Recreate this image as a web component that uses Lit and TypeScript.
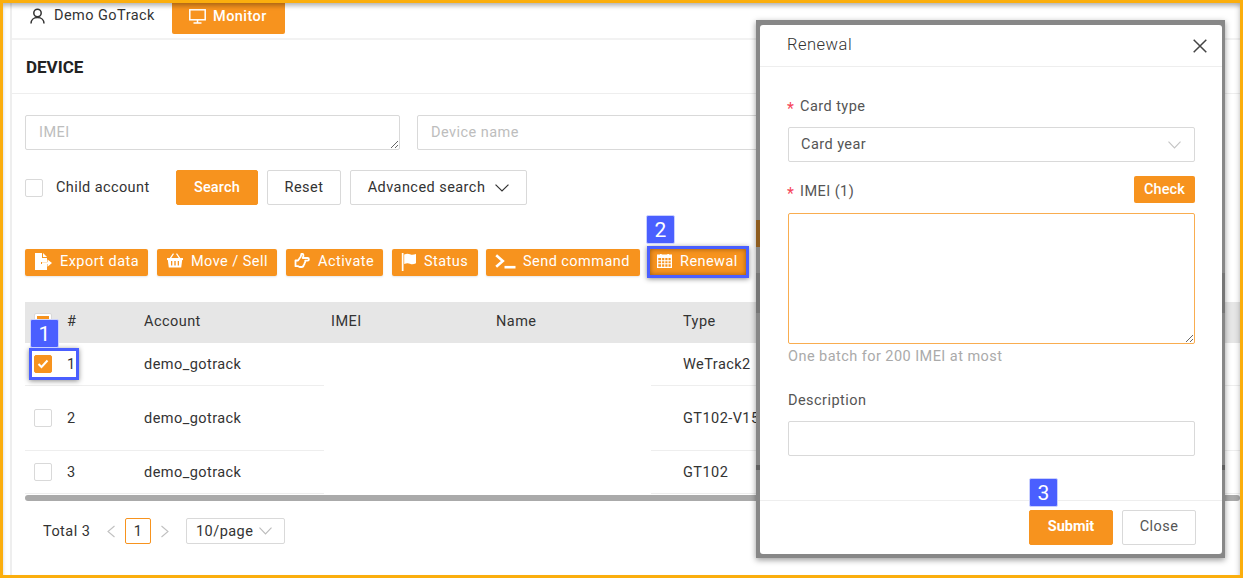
import { LitElement, html, css, svg } from 'lit'
import { customElement } from 'lit/decorators.js'

const icons: Record<string, unknown> = {
  export: svg`<svg class="ic" width="18" height="18" viewBox="0 0 18 18" fill="#fff"><path d="M1 0h7v5h5v4H7v2h6v6H1z"/><path d="M9 0l4 4H9z"/><path d="M8 9.200h5.500V6.500l4.500 3.600-4.500 3.600v-2.700H8z"/></svg>`,
  basket: svg`<svg class="ic" width="18" height="18" viewBox="0 2 18 18" fill="#fff"><path d="M3.400 7.500L7 2.200l1 .7-3 4.600zM14.600 7.500L11 2.200l-1 .7 3 4.600z"/><path fill-rule="evenodd" d="M1 7h16v2h-.8l-1 7.500H2.800L1.800 9H1zM5 10v4.500h1.300V10zm3.300 0v4.500h1.400V10zm3.400 0v4.500H13V10z"/></svg>`,
  hand: svg`<svg class="ic" width="17" height="17" viewBox="0 0 17 17" fill="none" stroke="#fff" stroke-width="1.800" stroke-linejoin="round"><path d="M1.500 7.500h2.500l2.500-3.500c.5-1 .8-2 .8-2.800 0-.8 1.600-.8 2 .5.3 1-.1 2.300-.6 3.300h5c1.600 0 1.600 2.700 0 2.700h-2.500c.3 1.200 0 2-.7 2.500.1 1-.3 1.800-1 2.100 0 1-.7 1.700-1.800 1.700H6c-.8 0-1.400-.6-2-.8H1.500z"/></svg>`,
  flag: svg`<svg class="ic" width="16" height="18" viewBox="0 0 16 18" fill="#fff"><path d="M.8 0h1.700v18H.8z"/><path d="M3.200 1.500c2.500-1.200 4.300-.9 5.800-.2 1.800.8 3.500.7 6-.3v9.300c-2.500 1.200-4.500 1.100-6 .4-1.600-.7-3.400-.8-5.800.2z"/></svg>`,
  terminal: svg`<svg class="ic" width="21" height="15" viewBox="0 0 21 15" fill="none" stroke="#fff" stroke-width="2.600"><path d="M1.200 1.200L7.800 7 1.200 12.800"/><path d="M9.500 13.200H20.500"/></svg>`,
  calendar: svg`<svg class="ic" width="15" height="15" viewBox="0 1 15 15" fill="#fff"><path fill-rule="evenodd" d="M3 0h1.700v1.500h5.600V0H12v1.500h3V15H0V1.500h3zM1.300 5v2.200h2.800V5zm3.800 0v2.200h2.200V5zm3.200 0v2.200h2.200V5zm3.200 0v2.200h2.200V5zM1.300 8.200v2h2.800v-2zm3.800 0v2h2.200v-2zm3.200 0v2h2.200v-2zm3.200 0v2h2.200v-2zM1.300 11.200v2.500h2.800v-2.500zm3.800 0v2.500h2.200v-2.500zm3.200 0v2.500h2.200v-2.500zm3.200 0v2.500h2.200v-2.500z"/></svg>`,
}

const chevron = (color: string, w = 13, h = 8) =>
  svg`<svg width=${w} height=${h} viewBox="0 0 13 8" fill="none" stroke=${color} stroke-width="1.100" preserveAspectRatio="none"><path d="M.5.7l6 6.300 6-6.300"/></svg>`

// pad is where the icon starts, text is where the label starts, both from the button's left edge
const actions = [
  { label: 'Export data', icon: 'export', width: 123, pad: 9, text: 35 },
  { label: 'Move / Sell', icon: 'basket', width: 120, pad: 9, text: 34 },
  { label: 'Activate', icon: 'hand', width: 97, pad: 8, text: 32 },
  { label: 'Status', icon: 'flag', width: 86, pad: 9, text: 32 },
  { label: 'Send command', icon: 'terminal', width: 154, pad: 9, text: 37 },
  { label: 'Renewal', icon: 'calendar', width: 98, pad: 8, text: 31 },
]

const rows = [
  { n: 1, type: 'WeTrack2', height: 43, checked: true },
  { n: 2, type: 'GT102-V15', height: 65, checked: false },
  { n: 3, type: 'GT102', height: 43, checked: false },
]

@customElement('app-root')
export class AppRoot extends LitElement {
  render() {
    return html`
      <div class="frame">
        <div class="panel">
          <div class="tabs">
            <div class="tab">
              <svg width="15" height="16" viewBox="0 0 15 16" fill="none" stroke="#333" stroke-width="1.500"><circle cx="7.500" cy="5" r="3.700"/><path d="M1 15.500c0-3.500 2.500-6 6.500-6s6.500 2.500 6.500 6"/></svg>
              Demo GoTrack
            </div>
            <div class="tab active">
              <svg width="17" height="15" viewBox="0 0 17 15" fill="none" stroke="#fff" stroke-width="1.500"><rect x=".8" y=".8" width="15.400" height="10"/><path d="M8.500 11v2.500M4.500 14h8"/></svg>
              Monitor
            </div>
          </div>
          <div class="title">DEVICE</div>
          <div class="filters">
            <div class="inputs">
              <textarea class="field" placeholder="IMEI"></textarea>
              <input class="field" placeholder="Device name" />
            </div>
            <div class="search-row">
              <span class="check"></span>
              <span class="child">Child account</span>
              <button class="btn primary search">Search</button>
              <button class="btn reset">Reset</button>
              <button class="btn advanced">Advanced search ${chevron('#333', 14, 8)}</button>
            </div>
          </div>
          <div class="toolbar">
            ${actions.map(
              a => html`<button class="act" style="width:${a.width}px;padding-left:${a.pad}px">
                <span class="ic-box" style="width:${a.text - a.pad}px">${icons[a.icon]}</span>
                <span class="act-label">${a.label}</span>
              </button>`
            )}
          </div>
          <div class="table">
            <div class="thead">
              <div class="cb-cell"><span class="check head-check"></span></div>
              <div>#</div>
              <div>Account</div>
              <div>IMEI</div>
              <div>Name</div>
              <div>Type</div>
            </div>
            ${rows.map(
              r => html`
                <div class="row" style="height:${r.height}px">
                  <div class="cb-cell line">
                    <span class="check ${r.checked ? 'on' : ''}">
                      ${r.checked
                        ? svg`<svg width="12" height="10" viewBox="0 0 12 10" fill="none" stroke="#fff" stroke-width="2"><path d="M1.500 5l3 3 6-6.500"/></svg>`
                        : ''}
                    </span>
                  </div>
                  <div class="line">${r.n}</div>
                  <div class="line">demo_gotrack</div>
                  <div></div>
                  <div class="line type">${r.type}</div>
                </div>
              `
            )}
            <div class="scrollbar"></div>
          </div>
          <div class="pager">
            <span class="total">Total 3</span>
            <svg class="arrow" width="10" height="13" viewBox="0 0 10 13" fill="none" stroke="#c0c0c0" stroke-width="1.100"><path d="M8.500 1L2 6.500 8.500 12"/></svg>
            <span class="page">1</span>
            <svg class="arrow" width="10" height="13" viewBox="0 0 10 13" fill="none" stroke="#c0c0c0" stroke-width="1.100"><path d="M1.500 1L8 6.500 1.500 12"/></svg>
            <span class="size">10/page ${chevron('#bbb')}</span>
          </div>
        </div>

        <div class="tag tag1">1</div>
        <div class="mark mark1"></div>
        <div class="tag tag2">2</div>
        <div class="mark mark2"></div>

        <div class="modal">
          <div class="dialog">
            <div class="m-head">
              <span>Renewal</span>
              <svg width="14" height="14" viewBox="0 0 14 14" fill="none" stroke="#444" stroke-width="1.500"><path d="M.7.7l12.600 12.600M13.300.7L.7 13.300"/></svg>
            </div>
            <div class="m-body">
              <div class="label first"><i>*</i>Card type</div>
              <div class="select">Card year ${chevron('#c4c4c4')}</div>
              <div class="label imei"><span><i>*</i>IMEI (1)</span><button class="check-btn">Check</button></div>
              <textarea class="area"></textarea>
              <div class="hint">One batch for 200 IMEI at most</div>
              <div class="label desc">Description</div>
              <input class="desc-input" />
            </div>
            <div class="m-foot">
              <button class="btn primary submit">Submit</button>
              <button class="btn close">Close</button>
              <div class="tag tag3">3</div>
            </div>
          </div>
        </div>
      </div>
    `
  }

  static styles = css`
    :host {
      display: block;
      width: 1243px;
      height: 578px;
      font-family: Roboto, 'Liberation Sans', sans-serif;
      font-size: 14.5px;
      letter-spacing: 0.45px;
      color: #333;
    }

    * {
      box-sizing: border-box;
    }

    button,
    input,
    textarea {
      font: inherit;
      letter-spacing: inherit;
      margin: 0;
    }

    .frame {
      position: relative;
      width: 1243px;
      height: 578px;
      border: 3px solid #fbae0d;
      background: #fff;
      overflow: hidden;
    }

    .frame::after {
      content: '';
      position: absolute;
      inset: 0;
      pointer-events: none;
      box-shadow: inset 0 4px 4px -1px rgba(0, 0, 0, 0.28), inset -5px 0 4px -2px rgba(0, 0, 0, 0.07);
    }

    .panel {
      margin-left: 7px;
      height: 100%;
      border-left: 2px solid #eee;
      overflow: hidden;
    }

    .tabs {
      display: flex;
      height: 37px;
      border-bottom: 2px solid #f2f2f2;
      padding-left: 18px;
    }

    .tab {
      display: flex;
      align-items: center;
      gap: 9px;
      height: 26px;
      width: 142px;
      padding-bottom: 1px;
    }

    .tab.active {
      width: 113px;
      height: 31px;
      padding: 0 0 5px 17px;
      gap: 7px;
      background: #f7931e;
      color: #fff;
      font-weight: 500;
      border-radius: 0 0 2px 2px;
    }

    .title {
      height: 54px;
      padding: 0 14px;
      display: flex;
      align-items: center;
      font-size: 17px;
      font-weight: 700;
      letter-spacing: 0;
      color: #222;
      border-bottom: 1px solid #eee;
    }

    .filters {
      padding: 21px 0 0 13px;
    }

    .inputs {
      display: flex;
      gap: 17px;
    }

    .field {
      display: block;
      flex: none;
      width: 375px;
      height: 35px;
      padding: 8px 13px;
      border: 1px solid #d9d9d9;
      border-radius: 2px;
      outline: none;
      color: #333;
    }

    textarea.field {
      padding-top: 8px;
    }

    .field::placeholder {
      color: #bdbdbd;
    }

    .search-row {
      display: flex;
      align-items: center;
      margin-top: 20px;
    }

    .check {
      display: flex;
      align-items: center;
      justify-content: center;
      width: 18px;
      height: 18px;
      flex: none;
      background: #fff;
      border: 1px solid #d9d9d9;
      border-radius: 2px;
    }

    .check.on {
      background: #f7931e;
      border-color: #f7931e;
    }

    .head-check {
      padding: 2px;
    }

    .head-check::before {
      content: '';
      width: 100%;
      height: 100%;
      background: #f7931e;
    }

    .child {
      margin-left: 13px;
      width: 120px;
      letter-spacing: 0.4px;
    }

    .btn {
      height: 35px;
      border: 1px solid #d9d9d9;
      border-radius: 2px;
      background: #fff;
      color: #333;
      padding: 0;
    }

    .btn.primary {
      background: #f7931e;
      border-color: #f7931e;
      color: #fff;
    }

    .search {
      width: 82px;
      letter-spacing: 0.2px;
      font-weight: 500;
    }

    .reset {
      width: 74px;
      margin-left: 9px;
    }

    .advanced {
      display: flex;
      align-items: center;
      justify-content: center;
      gap: 10px;
      width: 177px;
      margin-left: 9px;
    }

    .toolbar {
      display: flex;
      gap: 9px;
      margin: 44px 0 0 13px;
    }

    .act {
      display: flex;
      align-items: center;
      height: 27px;
      flex: none;
      border: none;
      border-radius: 2px;
      background: #f7931e;
      color: #fff;
      box-shadow: 0 1px 2px rgba(0, 0, 0, 0.1);
    }

    .ic-box {
      display: flex;
      align-items: center;
      flex: none;
      padding-bottom: 2px;
    }

    .act-label {
      padding-bottom: 2px;
    }

    .act:nth-child(5) {
      margin-left: -1px;
    }

    .table {
      margin: 26px 0 0 13px;
    }

    .thead {
      display: grid;
      grid-template-columns: 42px 77px 187px 165px 187px 1fr;
      align-items: center;
      height: 41px;
      padding-bottom: 2px;
      background: #e6e6e6;
    }

    .cb-cell {
      padding-left: 9px;
    }

    .row {
      display: grid;
      grid-template-columns: 42px 77px 180px 327px 1fr;
    }

    .row > div {
      display: flex;
      align-items: center;
    }

    .row .line {
      border-bottom: 1px solid #eee;
    }

    .row:last-of-type .line {
      border-bottom: none;
    }

    .type {
      padding-left: 32px;
    }

    .scrollbar {
      height: 6px;
      margin-top: 1px;
      background: #aaa;
      border-radius: 3px;
    }

    .pager {
      display: flex;
      align-items: center;
      height: 26px;
      margin: 17px 0 0 31px;
    }

    .total {
      width: 63px;
    }

    .arrow {
      flex: none;
    }

    .page {
      display: flex;
      align-items: center;
      justify-content: center;
      width: 26px;
      height: 26px;
      margin: 0 9px;
      border: 1px solid #f7931e;
      border-radius: 2px;
    }

    .size {
      display: flex;
      align-items: center;
      justify-content: space-between;
      width: 99px;
      height: 26px;
      margin-left: 16px;
      padding: 0 12px 0 9px;
      border: 1px solid #d9d9d9;
      border-radius: 2px;
    }

    .tag {
      position: absolute;
      display: flex;
      align-items: center;
      justify-content: center;
      width: 29px;
      height: 29px;
      background: #4a5fff;
      border: 1px solid #c9d0ff;
      border-radius: 2px;
      color: #fff;
      font-size: 21px;
      letter-spacing: 0;
      z-index: 3;
    }

    .tag1 {
      left: 27px;
      top: 316px;
    }

    .tag2 {
      left: 643px;
      top: 212px;
    }

    .tag3 {
      left: 269px;
      top: 453px;
    }

    .mark {
      position: absolute;
      border: 3px solid #4a5fff;
      box-shadow: 0 1px 5px rgba(0, 0, 0, 0.45);
      z-index: 2;
    }

    .mark1 {
      left: 26px;
      top: 345px;
      width: 50px;
      height: 32px;
    }

    .mark2 {
      left: 644px;
      top: 243px;
      width: 102px;
      height: 32px;
      box-shadow: 0 1px 5px rgba(0, 0, 0, 0.45), inset 0 0 5px rgba(90, 50, 0, 0.6);
    }

    .modal {
      position: absolute;
      left: 753px;
      top: 17px;
      width: 469px;
      height: 538px;
      padding: 5px 3px 4px 4px;
      /* the button row and table of the page show through the left border only as the brown band */
      background:
        linear-gradient(#8e5c1e, #8e5c1e) left 200px / 4px 27px no-repeat,
        linear-gradient(
          to bottom,
          #878787 0,
          #878787 253px,
          #767676 253px,
          #767676 293px,
          #878787 293px,
          #878787 445px,
          #5f5f5f 445px,
          #5f5f5f 450px,
          #878787 450px
        );
      box-shadow: 0 2px 6px rgba(0, 0, 0, 0.4);
      z-index: 4;
    }

    .dialog {
      position: relative;
      display: flex;
      flex-direction: column;
      height: 100%;
      background: #fff;
      border-radius: 3px;
      color: #555;
    }

    .m-head {
      display: flex;
      align-items: center;
      justify-content: space-between;
      height: 42px;
      padding: 0 15px 0 27px;
      font-size: 16.500px;
      font-weight: 300;
      letter-spacing: 0.5px;
      color: #333;
      border-bottom: 1px solid #eee;
      flex: none;
    }

    .m-head span {
      padding-bottom: 2px;
    }

    .m-body {
      flex: 1;
      padding: 0 27px 0 28px;
    }

    .label {
      color: #555;
    }

    .label i {
      display: inline-block;
      width: 13px;
      margin-left: -1px;
      font-style: normal;
      font-size: 16px;
      line-height: 14px;
      vertical-align: -3px;
      color: #f5465a;
    }

    .first {
      margin-top: 31px;
      height: 17px;
      line-height: 17px;
    }

    .select {
      display: flex;
      align-items: center;
      justify-content: space-between;
      height: 35px;
      margin-top: 12px;
      padding: 0 13px 0 12px;
      border: 1px solid #d9d9d9;
      border-radius: 2px;
    }

    .imei {
      display: flex;
      align-items: center;
      justify-content: space-between;
      height: 27px;
      margin-top: 14px;
    }

    .imei span {
      margin-top: 4px;
    }

    .check-btn {
      width: 61px;
      height: 27px;
      padding: 0;
      border: none;
      border-radius: 2px;
      background: #f7931e;
      color: #fff;
      font-weight: 500;
      letter-spacing: 0.1px;
    }

    .area {
      display: block;
      width: 407px;
      height: 131px;
      margin-top: 10px;
      border: 1px solid #f9ad50;
      border-radius: 2px;
      outline: none;
    }

    .hint {
      margin-top: 4px;
      line-height: 17px;
      color: #aaa;
    }

    .desc {
      margin-top: 27px;
      line-height: 17px;
    }

    .desc-input {
      display: block;
      width: 407px;
      height: 35px;
      margin-top: 12px;
      border: 1px solid #d9d9d9;
      border-radius: 2px;
      outline: none;
    }

    .m-foot {
      display: flex;
      justify-content: flex-end;
      gap: 9px;
      height: 54px;
      padding: 9px 26px 0 0;
      border-top: 1px solid #eee;
      flex: none;
    }

    .m-foot .btn {
      padding-bottom: 2px;
    }

    .submit {
      width: 84px;
      font-weight: 700;
      letter-spacing: 0;
    }

    .close {
      width: 74px;
      color: #555;
    }

    .m-foot .tag3 {
      left: 269px;
      top: 453px;
    }
  `
}
